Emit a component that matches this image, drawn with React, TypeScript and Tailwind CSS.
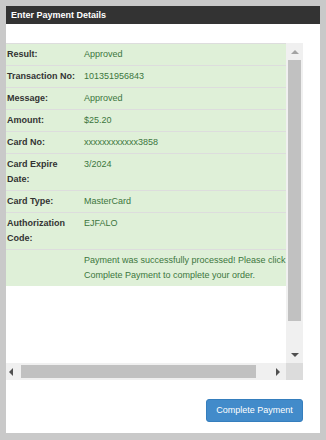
import React from 'react';

const rows: { label: string; value: React.ReactNode }[] = [
  { label: 'Result:', value: 'Approved' },
  { label: 'Transaction No:', value: '101351956843' },
  { label: 'Message:', value: 'Approved' },
  { label: 'Amount:', value: '$25.20' },
  { label: 'Card No:', value: 'xxxxxxxxxxxx3858' },
  { label: 'Card Expire Date:', value: '3/2024' },
  { label: 'Card Type:', value: 'MasterCard' },
  { label: 'Authorization Code:', value: 'EJFALO' },
  {
    label: '',
    value: (
      <>
        Payment was successfully processed! Please click
        <br />
        Complete Payment to complete your order.
      </>
    ),
  },
];

const Arrow: React.FC<{ dir: 'up' | 'down' | 'left' | 'right'; color: string }> = ({ dir, color }) => {
  const pts = {
    up: '0,4 4,0 8,4',
    down: '0,0 8,0 4,4',
    left: '4,0 4,8 0,4',
    right: '0,0 0,8 4,4',
  }[dir];
  const vertical = dir === 'up' || dir === 'down';
  return (
    <svg width={vertical ? 8 : 4} height={vertical ? 4 : 8} viewBox={vertical ? '0 0 8 4' : '0 0 4 8'}>
      <polygon points={pts} fill={color} />
    </svg>
  );
};

export default function App() {
  return (
    <div className="w-[326px] h-[440px] bg-[#c9c9c9] pt-[6px] pl-[6px] font-['Liberation_Sans',Arial,sans-serif]">
      <div className="w-[314px] h-[427px] bg-white flex flex-col">
        {/* Header */}
        <div className="h-[18px] bg-[#333333] text-white font-bold text-[9px] leading-[18px] px-[5px]">
          Enter Payment Details
        </div>

        {/* Scroll box */}
        <div className="mt-[19px] w-[297px] flex flex-col">
          <div className="flex h-[320px]">
            <div className="w-[280px] h-[320px] overflow-hidden">
              <table className="w-[303px] border-collapse bg-[#dff0d8] text-[9px] leading-[15px]">
                <tbody>
                  {rows.map((r, i) => (
                    <tr key={i} className="border-t border-[#dddddd] align-top">
                      <td className="w-[78px] pl-[1px] pr-[4px] py-[3px] font-bold text-[#333333]">{r.label}</td>
                      <td className="py-[3px] text-[#3c763d] whitespace-nowrap">{r.value}</td>
                    </tr>
                  ))}
                </tbody>
              </table>
            </div>
            {/* Vertical scrollbar */}
            <div className="w-[17px] h-[320px] bg-[#f0f0f0] flex flex-col">
              <div className="h-[17px] flex items-center justify-center">
                <Arrow dir="up" color="#a3a3a3" />
              </div>
              <div className="flex-1 flex flex-col">
                <div className="ml-[2px] w-[13px] h-[261px] bg-[#c1c1c1]" />
              </div>
              <div className="h-[17px] flex items-center justify-center">
                <Arrow dir="down" color="#505050" />
              </div>
            </div>
          </div>
          {/* Horizontal scrollbar */}
          <div className="flex h-[17px]">
            <div className="w-[280px] bg-[#f0f0f0] flex items-center">
              <div className="w-[15px] flex items-center pl-[3px]">
                <Arrow dir="left" color="#505050" />
              </div>
              <div className="w-[235px] h-[13px] bg-[#c1c1c1]" />
              <div className="flex-1" />
              <div className="w-[17px] flex items-center justify-center">
                <Arrow dir="right" color="#505050" />
              </div>
            </div>
            <div className="w-[17px] bg-[#dcdcdc]" />
          </div>
        </div>

        {/* Footer */}
        <div className="mt-[19px] w-[297px] flex justify-end">
          <button className="w-[97px] h-[23px] bg-[#428bca] border border-[#357ebd] rounded-[3px] text-white text-[9px] leading-[21px]">
            Complete Payment
          </button>
        </div>
      </div>
    </div>
  );
}
